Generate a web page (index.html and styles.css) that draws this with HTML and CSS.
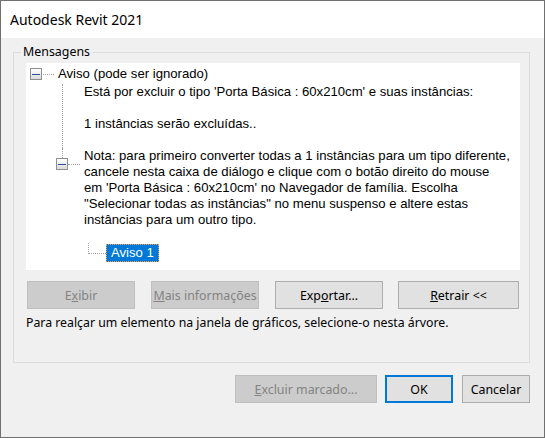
FILE: index.html
```html
<!DOCTYPE html>
<html lang="pt-BR">

<head>
    <meta charset="UTF-8">
    <title>Autodesk Revit 2021</title>
    <link rel="stylesheet" href="styles.css">
</head>

<body>
    <div class="window">
        <div class="titlebar">Autodesk Revit 2021</div>
        <div class="content">
            <fieldset class="group">
                <legend>Mensagens</legend>
                <div class="tree">
                    <div class="node root">
                        <span class="twist"></span>
                        <span class="hline"></span>
                        <span class="label">Aviso (pode ser ignorado)</span>
                    </div>
                    <div class="children">
                        <div class="desc">
                            Está por excluir o tipo 'Porta Básica : 60x210cm' e suas instâncias:<br>
                            <br>
                            1 instâncias serão excluídas..<br>
                            <br>
                        </div>
                        <div class="node nota">
                            <div class="twist-col">
                                <span class="stub"></span>
                                <span class="twist"></span>
                            </div>
                            <span class="hline"></span>
                            <span class="label">
                                Nota: para primeiro converter todas a 1 instâncias para um tipo diferente,<br>
                                cancele nesta caixa de diálogo e clique com o botão direito do mouse<br>
                                em 'Porta Básica : 60x210cm' no Navegador de família. Escolha<br>
                                "Selecionar todas as instâncias" no menu suspenso e altere estas<br>
                                instâncias para um outro tipo.
                            </span>
                        </div>
                    </div>
                    <div class="node leaf">
                        <span class="elbow"></span>
                        <span class="selected">Aviso 1</span>
                    </div>
                </div>

                <div class="actions">
                    <button class="btn w108" disabled>E<u>x</u>ibir</button>
                    <button class="btn w108" disabled><u>M</u>ais informações</button>
                    <button class="btn w108">Exp<u>o</u>rtar...</button>
                    <button class="btn w121"><u>R</u>etrair &lt;&lt;</button>
                </div>
                <p class="hint">Para realçar um elemento na janela de gráficos, selecione-o nesta árvore.</p>
            </fieldset>

            <div class="footer">
                <button class="btn w142" disabled><u>E</u>xcluir marcado...</button>
                <button class="btn w68 default">OK</button>
                <button class="btn w68">Cancelar</button>
            </div>
        </div>
    </div>
</body>

</html>
```

FILE: styles.css
```css
* {
    box-sizing: border-box;
}

body {
    margin: 0;
    background: #ffffff;
    font-family: 'Noto Sans', sans-serif;
    font-size: 12px;
    color: #000000;
}

.window {
    width: 545px;
    height: 438px;
    border: 1px solid #707070;
    display: flex;
    flex-direction: column;
}

.titlebar {
    height: 37px;
    padding-left: 9px;
    background: #ffffff;
    font-size: 14px;
    line-height: 37px;
}

.content {
    flex: 1;
    background: #f0f0f0;
    padding: 6px 14px 0 12px;
}

/* group box */
.group {
    margin: 0;
    border: 1px solid #dcdcdc;
    padding: 3px 9px 31px 12px;
}

.group legend {
    padding: 0 2px;
    margin-left: -5px;
    line-height: 16px;
    font-size: 12.4px;
}

/* message tree */
.tree {
    height: 207px;
    background: #ffffff;
    padding: 3px 0 0 4px;
    font-family: 'Liberation Sans', Arial, sans-serif;
    font-size: 13.15px;
    line-height: 16px;
    white-space: nowrap;
}

.node {
    display: flex;
}

.root {
    align-items: center;
    height: 16px;
}

.twist {
    width: 12px;
    height: 12px;
    border: 1px solid #8e8f8f;
    background: linear-gradient(#ffffff, #dadada);
    display: flex;
    align-items: center;
    justify-content: center;
    flex-shrink: 0;
}

.twist::before {
    content: "";
    width: 8px;
    height: 1px;
    background: #2c4ea3;
}

.hline {
    width: 11px;
    border-top: 1px dotted #a0a0a0;
    flex-shrink: 0;
}

.root .hline {
    margin-left: 1px;
}

.root .label {
    margin-left: 4px;
}

.children {
    margin-left: 26px;
}

.desc {
    margin: 2px 0 0 6px;
    border-left: 1px dotted #a0a0a0;
    padding-left: 21px;
}

.nota {
    align-items: flex-start;
}

.twist-col {
    width: 12px;
    display: flex;
    flex-direction: column;
}

.stub {
    height: 10px;
    margin-left: 6px;
    border-left: 1px dotted #a0a0a0;
}

.nota .hline {
    width: 12px;
    margin-top: 16px;
}

.nota .label {
    margin-left: 4px;
}

.leaf {
    margin: 15px 0 0 58px;
    align-items: flex-start;
}

.elbow {
    width: 18px;
    height: 11px;
    border-left: 1px dotted #a0a0a0;
    border-bottom: 1px dotted #a0a0a0;
}

.selected {
    margin-top: 1px;
    height: 18px;
    line-height: 18px;
    padding: 0 5px;
    background: #0078d7;
    color: #ffffff;
    outline: 1px dotted #f6a14a;
    outline-offset: -1px;
}

/* buttons */
.actions {
    display: flex;
    gap: 16px;
    margin: 11px 1px 0 1px;
}

.actions .btn:last-child {
    margin-left: -1px;
}

.btn {
    height: 28px;
    padding: 0;
    border: 1px solid #adadad;
    background: #e1e1e1;
    font-family: inherit;
    font-size: 12.4px;
    color: #000000;
}

.btn:disabled {
    background: #cccccc;
    border-color: #bfbfbf;
    color: #838383;
}

.btn.default {
    border: 2px solid #0078d7;
}

.w68 { width: 68px; }
.w108 { width: 108px; }
.w121 { width: 121px; }
.w142 { width: 142px; }

.hint {
    margin: 6px 0 0 0;
    line-height: 16px;
    font-size: 12.3px;
}

.footer {
    display: flex;
    justify-content: flex-end;
    gap: 8px;
    margin-top: 12px;
}

.footer .btn:last-child {
    margin-left: 1px;
}
```
